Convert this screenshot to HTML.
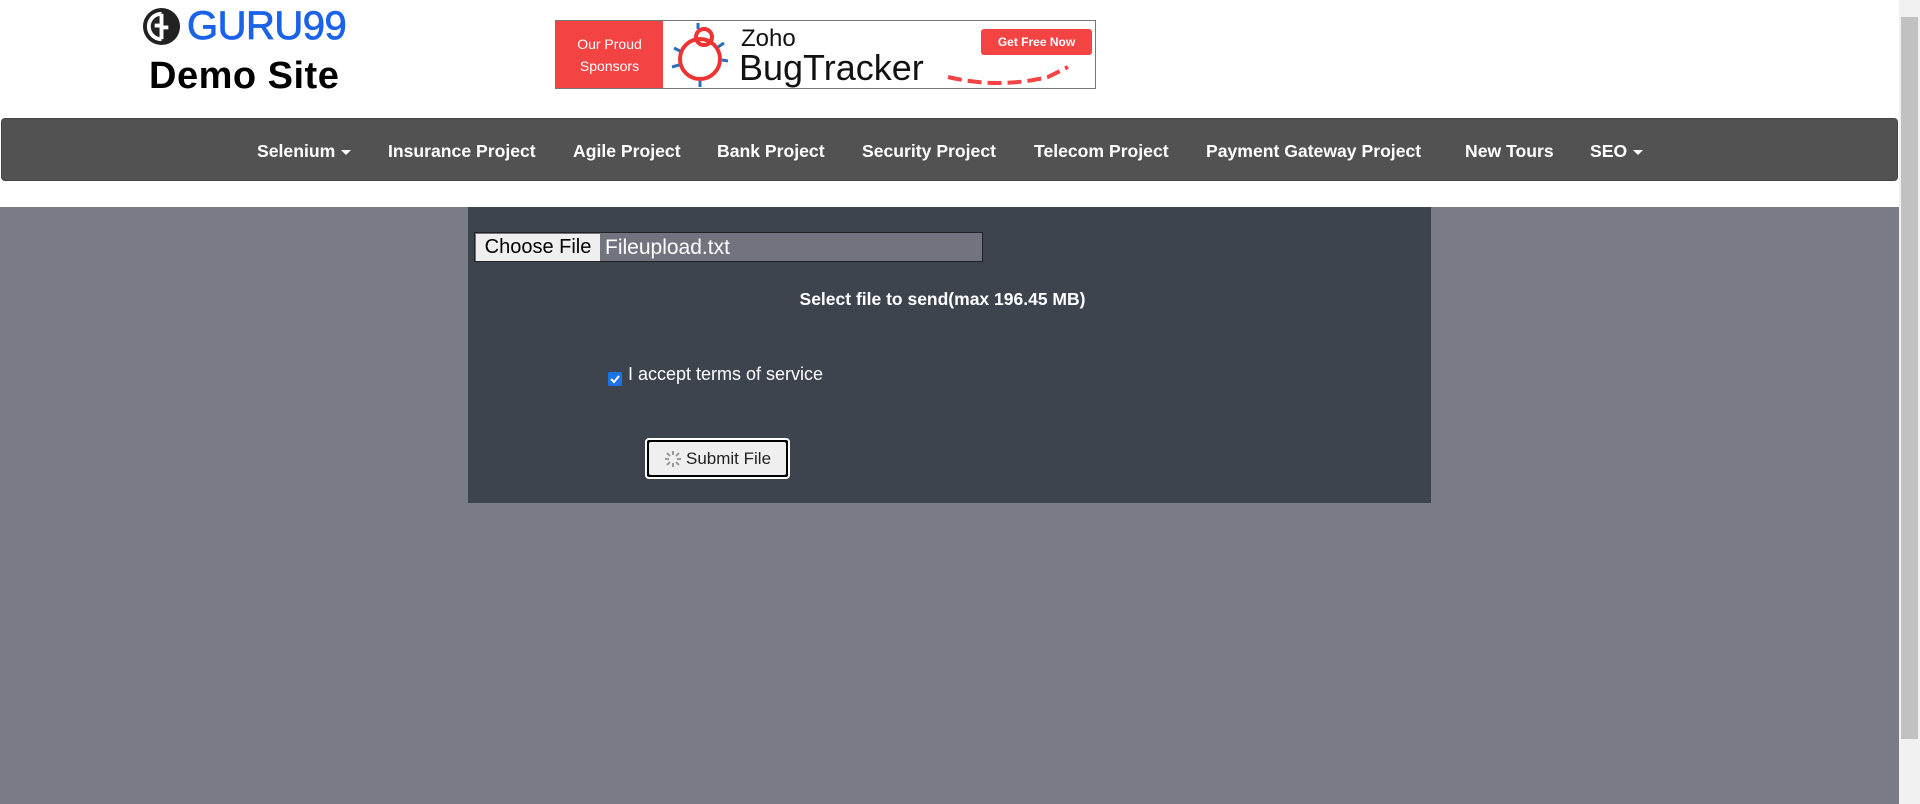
<!DOCTYPE html>
<html><head><meta charset="utf-8"><style>
*{margin:0;padding:0;box-sizing:border-box}
body{width:1920px;height:804px;overflow:hidden;background:#fff;font-family:"Liberation Sans",sans-serif;position:relative}
.abs{position:absolute}
.nav{left:1px;top:118px;width:1897px;height:63px;background:#525252;border-radius:4px;border:1px solid #444}
.nav span{position:absolute;top:22px;color:#fff;font-weight:bold;font-size:17.6px;white-space:nowrap}
.caret{display:inline-block;width:0;height:0;border-left:5px solid transparent;border-right:5px solid transparent;border-top:5px solid #fff;vertical-align:middle;margin-left:6px}
</style></head><body>
<svg class="abs" style="left:142px;top:7px" width="39" height="39" viewBox="0 0 40 40"><circle cx="20" cy="20" r="19" fill="#222"/><path d="M20 7a13 13 0 1 0 0 26M20 7v12h-7M20 33V21h7" stroke="#fff" stroke-width="4" fill="none"/></svg>
<div class="abs" style="left:187px;top:4px;font-size:40px;color:#1a62e8;letter-spacing:-0.5px;-webkit-text-stroke:0.8px #1a62e8">GURU99</div>
<div class="abs" style="left:149px;top:55px;font-size:38px;font-weight:bold;color:#000;letter-spacing:0.5px">Demo Site</div>
<div class="abs" style="left:555px;top:20px;width:541px;height:69px;border:1px solid #777;background:#fff">
 <div class="abs" style="left:0;top:0;width:107px;height:67px;background:#f34343;color:#fff;font-size:14px;text-align:center;line-height:22px;padding-top:12px">Our Proud<br>Sponsors</div>
 <svg class="abs" style="left:114px;top:2px" width="62" height="64" viewBox="0 0 62 64"><circle cx="30" cy="36" r="20" fill="none" stroke="#e33" stroke-width="4"/><circle cx="34" cy="14" r="8" fill="none" stroke="#e33" stroke-width="4"/><g stroke="#2a6fbe" stroke-width="3"><path d="M4 25l6 3M2 44l7-2M58 38l-6-1M54 20l-6 4M28 0v6M30 58v6"/></g></svg>
 <div class="abs" style="left:185px;top:4px;font-size:24px;color:#111">Zoho</div>
 <div class="abs" style="left:183px;top:26px;font-size:36px;color:#111">BugTracker</div>
 <div class="abs" style="left:425px;top:8px;width:111px;height:26px;background:#f34343;border-radius:3px;color:#fff;font-size:12px;font-weight:bold;text-align:center;line-height:26px">Get Free Now</div>
 <svg class="abs" style="left:390px;top:36px" width="140" height="30"><path d="M2 20q50 12 100 0l20-10" stroke="#f34343" stroke-width="4" stroke-dasharray="14 6" fill="none"/></svg>
</div>
<div class="abs nav">
 <span style="left:255px">Selenium<i class="caret"></i></span>
 <span style="left:386px">Insurance Project</span>
 <span style="left:571px">Agile Project</span>
 <span style="left:715px">Bank Project</span>
 <span style="left:860px">Security Project</span>
 <span style="left:1032px">Telecom Project</span>
 <span style="left:1204px">Payment Gateway Project</span>
 <span style="left:1463px">New Tours</span>
 <span style="left:1588px">SEO<i class="caret"></i></span>
</div>
<div class="abs" style="left:0;top:207px;width:1899px;height:597px;background:#797c87"></div>
<div class="abs" style="left:468px;top:207px;width:963px;height:296px;background:#3d444e"></div>
<div class="abs" style="left:474px;top:232px;width:509px;height:30px;background:#71747f;border:1px solid #222"></div>
<div class="abs" style="left:476px;top:234px;width:124px;height:27px;background:#efefef;color:#000;font-size:20px;line-height:27px;text-align:center">Choose File</div>
<div class="abs" style="left:605px;top:233px;color:#fff;font-size:21px;line-height:29px">Fileupload.txt</div>
<div class="abs" style="left:468px;top:289px;width:963px;text-align:center;color:#fff;font-weight:bold;font-size:17.5px"><span style="margin-left:-14px">Select file to send(max 196.45 MB)</span></div>
<div class="abs" style="left:608px;top:372px;width:14px;height:14px;background:#1a73e8;border-radius:2px"><svg width="14" height="14"><path d="M3 7l3 3 5-6" stroke="#fff" stroke-width="2" fill="none"/></svg></div>
<div class="abs" style="left:628px;top:364px;color:#fff;font-size:18px">I accept terms of service</div>
<div class="abs" style="left:645px;top:438px;width:145px;height:41px;border:2px solid #fff;border-radius:4px;background:#000;padding:2px">
 <div style="width:100%;height:100%;background:#efefef;border-radius:2px;font-size:17px;line-height:33px;color:#222;padding-left:37px;position:relative">
 <svg style="position:absolute;left:15px;top:8px" width="18" height="18" viewBox="0 0 18 18"><g stroke="#999" stroke-width="2"><path d="M9 1v4M9 13v4M1 9h4M13 9h4M3 3l3 3M12 12l3 3M15 3l-3 3M3 15l3-3"/></g></svg>Submit File</div>
</div>
<div class="abs" style="left:1899px;top:0;width:21px;height:804px;background:#f1f1f1"></div>
<div class="abs" style="left:1901px;top:17px;width:17px;height:722px;background:#c1c1c1"></div>
</body></html>
